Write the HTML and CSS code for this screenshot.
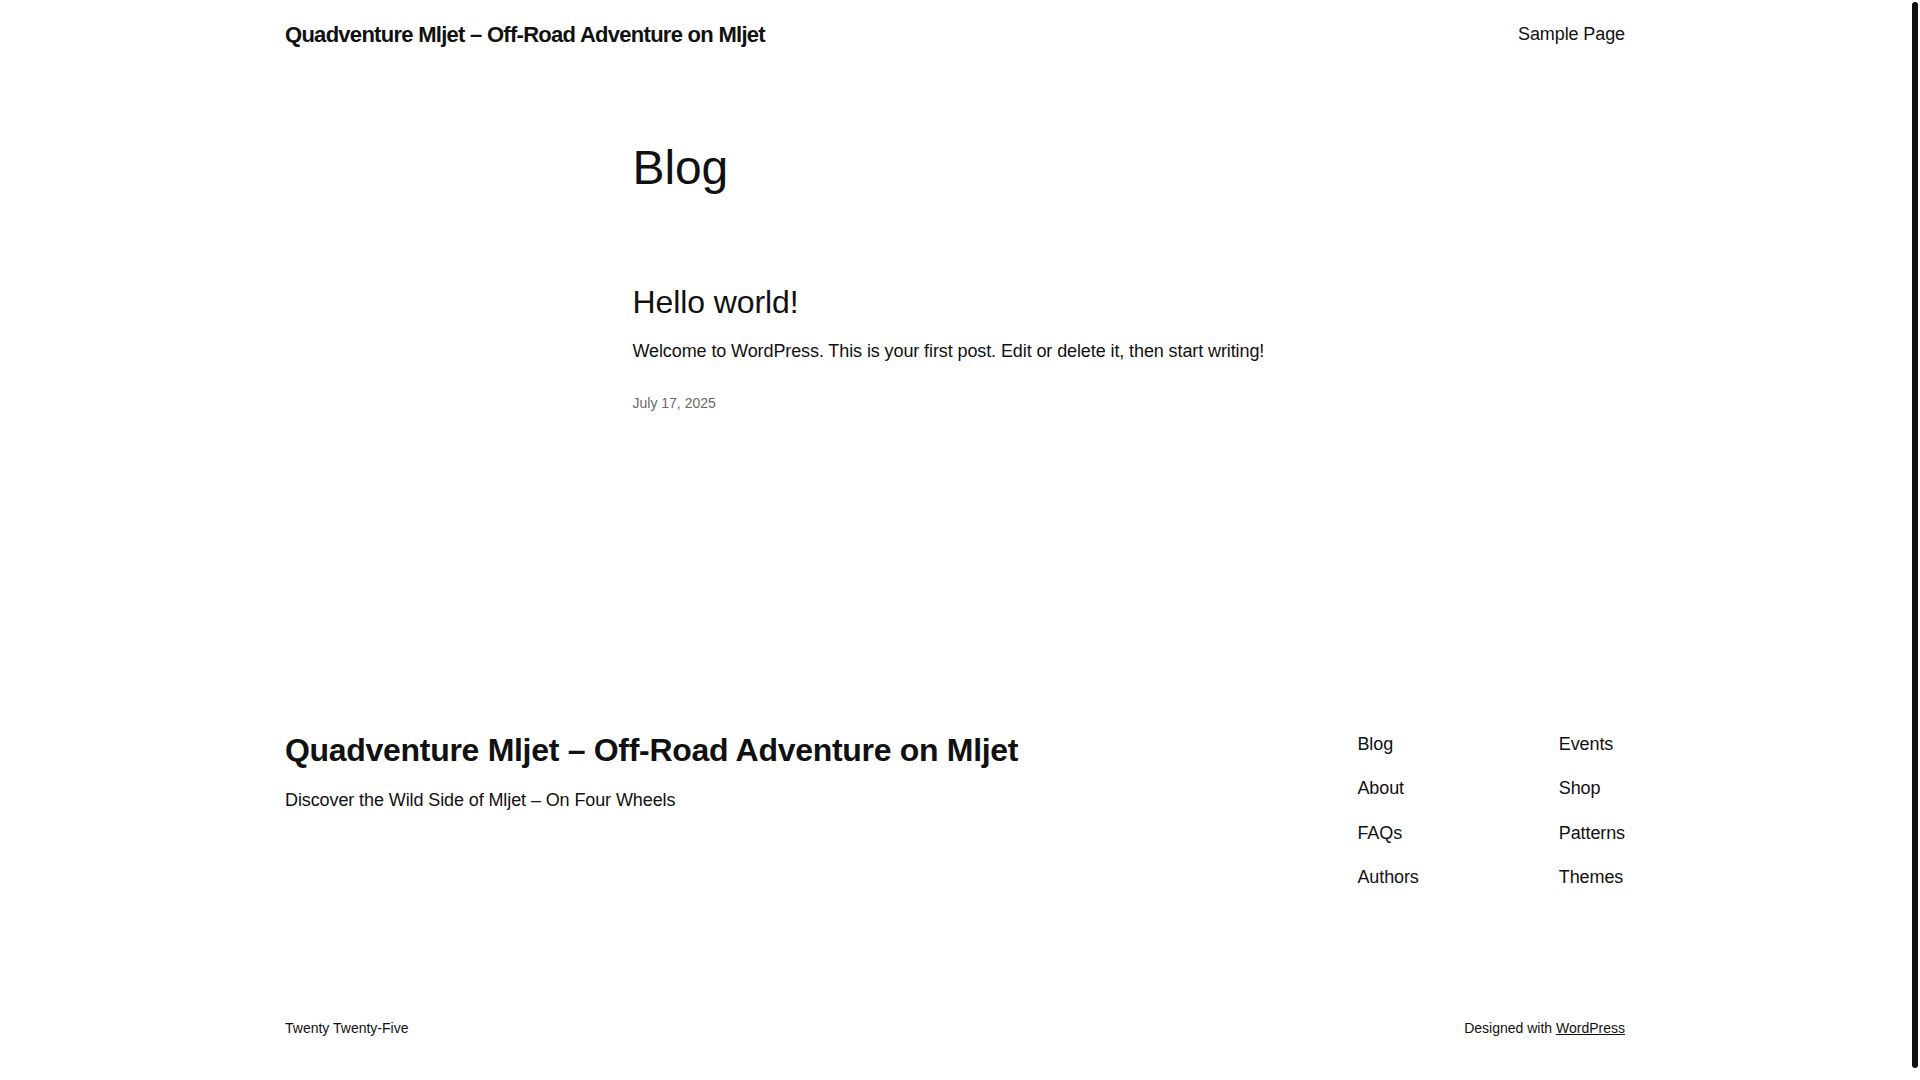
FILE: index.html
```html
<!DOCTYPE html>
<html lang="en">
<head>
<meta charset="utf-8">
<title>Blog – Quadventure Mljet</title>
<link rel="stylesheet" href="styles.css">
</head>
<body>
<div class="page">
  <header class="site-header">
    <a class="site-title" href="#">Quadventure Mljet – Off-Road Adventure on Mljet</a>
    <nav class="header-nav">
      <a href="#">Sample Page</a>
    </nav>
  </header>

  <main class="main">
    <div class="content">
      <h1 class="page-title">Blog</h1>
      <article class="post">
        <h2 class="post-title"><a href="#">Hello world!</a></h2>
        <p class="post-excerpt">Welcome to WordPress. This is your first post. Edit or delete it, then start writing!</p>
        <time class="post-date">July 17, 2025</time>
      </article>
    </div>
  </main>

  <footer class="site-footer">
    <div class="footer-top">
      <div class="footer-brand">
        <a class="footer-title" href="#">Quadventure Mljet – Off-Road Adventure on Mljet</a>
        <p class="tagline">Discover the Wild Side of Mljet – On Four Wheels</p>
      </div>
      <div class="footer-navs">
        <nav class="footer-nav">
          <a href="#">Blog</a>
          <a href="#">About</a>
          <a href="#">FAQs</a>
          <a href="#">Authors</a>
        </nav>
        <nav class="footer-nav">
          <a href="#">Events</a>
          <a href="#">Shop</a>
          <a href="#">Patterns</a>
          <a href="#">Themes</a>
        </nav>
      </div>
    </div>
    <div class="footer-bottom">
      <span>Twenty Twenty-Five</span>
      <span>Designed with <a class="wp-link" href="#">WordPress</a></span>
    </div>
  </footer>
</div>
<div class="scroll-thumb" aria-hidden="true"></div>
</body>
</html>
```

FILE: styles.css
```css
html, body {
  margin: 0;
  padding: 0;
  background: #ffffff;
}

body {
  font-family: "Liberation Sans", Arial, sans-serif;
  color: #111111;
  font-size: 18px;
  line-height: 1.4;
  letter-spacing: -0.1px;
  padding-right: 10px;
}

a {
  color: inherit;
  text-decoration: none;
}

.page {
  width: 1340px;
  margin: 0 auto;
  padding-bottom: 38px;
}

/* Header */
.site-header {
  height: 70px;
  display: flex;
  align-items: center;
  justify-content: space-between;
}

.site-title {
  font-size: 22px;
  font-weight: 700;
  letter-spacing: -0.72px;
  line-height: 1.4;
}

.header-nav a {
  font-size: 18px;
  line-height: 25.2px;
}

/* Main */
.main {
  padding-top: 71px;
}

.content {
  width: 645px;
  margin: 0 auto;
}

.page-title {
  margin: 0;
  font-size: 48px;
  font-weight: 400;
  line-height: 54px;
}

.post {
  margin-top: 89px;
}

.post-title {
  margin: 0;
  font-size: 32px;
  font-weight: 400;
  line-height: 36px;
}

.post-excerpt {
  margin: 19px 0 0;
  font-size: 18px;
  line-height: 25.2px;
}

.post-date {
  display: block;
  margin-top: 30px;
  font-size: 14px;
  line-height: 19.6px;
  letter-spacing: 0;
  color: #686868;
}

/* Footer */
.site-footer {
  margin-top: 318px;
}

.footer-top {
  display: flex;
  justify-content: space-between;
  align-items: flex-start;
}

.footer-brand {
  display: flex;
  flex-direction: column;
}

.footer-title {
  font-size: 32px;
  font-weight: 700;
  letter-spacing: -0.3px;
  line-height: 36px;
}

.tagline {
  margin: 20px 0 0;
  font-size: 18px;
  line-height: 25.2px;
}

.footer-navs {
  display: flex;
  gap: 140px;
}

.footer-nav {
  display: flex;
  flex-direction: column;
  gap: 19.2px;
}

.footer-nav a {
  font-size: 18px;
  line-height: 25.2px;
}

.footer-bottom {
  margin-top: 129px;
  display: flex;
  justify-content: space-between;
  font-size: 14px;
  line-height: 19.6px;
  letter-spacing: 0;
}

.wp-link {
  text-decoration: underline;
}

/* Overlay scrollbar thumb seen at the right edge */
.scroll-thumb {
  position: fixed;
  top: 2px;
  right: 2px;
  width: 6px;
  height: 1066px;
  background: #111111;
  border-radius: 3px;
}
```
